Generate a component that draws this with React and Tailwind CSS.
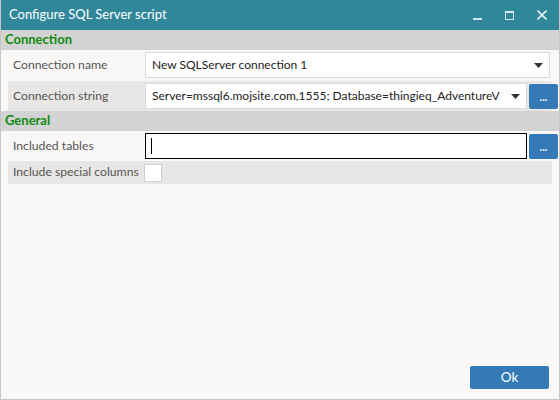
import { useState } from "react";

const font = { fontFamily: 'Lato, "Noto Sans", sans-serif' };

const Caret = () => (
  <svg width="9" height="5" viewBox="0 0 9 5" className="shrink-0">
    <path d="M0 0 H9 L4.5 5 Z" fill="#333" />
  </svg>
);

const Dots = () => (
  <button className="w-[29px] h-[25px] bg-[#337ab7] rounded-[2px] flex items-end justify-center pb-[7px] shrink-0">
    <span className="text-white text-[11px] leading-none font-bold">...</span>
  </button>
);

const Section = ({ title }) => (
  <div className="h-[20px] bg-[#d3d3d3] flex items-center pl-[4px]">
    <span className="text-[#118a11] font-bold text-[13px]">{title}</span>
  </div>
);

const Row = ({ label, alt, children, h = "h-[30px]" }) => (
  <div
    className={`${h} flex items-center mx-[7px] rounded-[3px] ${
      alt ? "bg-[#e8e7e5]" : ""
    }`}
  >
    <div className="w-[137px] pl-[5px] text-[12.2px] text-[#555] shrink-0 whitespace-nowrap">
      {label}
    </div>
    <div className="flex-1 flex items-center gap-[2px] pr-[1px]">{children}</div>
  </div>
);

export default function App() {
  const [checked, setChecked] = useState(false);

  return (
    <div
      className="w-[560px] h-[400px] bg-[#f9f8f6] border-l border-r border-b border-[#c6c6c6] flex flex-col overflow-hidden"
      style={font}
    >
      <div className="h-[30px] bg-[#31879a] flex items-center pl-[8px] pr-[12px] shrink-0">
        <span className="text-white text-[13px] flex-1">Configure SQL Server script</span>
        <div className="flex items-center gap-[23px]">
          <div className="w-[9px] h-[9px] flex items-end">
            <div className="w-[9px] h-[2px] bg-[#d6e8ec]" />
          </div>
          <div className="w-[9px] h-[9px] border border-[#d6e8ec] border-t-2" />
          <svg width="10" height="10" viewBox="0 0 10 10">
            <path d="M0.5 0.5 L9.5 9.5 M9.5 0.5 L0.5 9.5" stroke="#e4eff2" strokeWidth="1.6" />
          </svg>
        </div>
      </div>

      <Section title="Connection" />
      <div className="flex flex-col gap-[1px]">
        <Row label="Connection name">
          <div className="flex-1 h-[26px] bg-white border border-[#d8d8d8] flex items-center pl-[6px] pr-[6px] mr-[1px]">
            <span className="flex-1 text-[12px] text-[#222]">New SQLServer connection 1</span>
            <Caret />
          </div>
        </Row>
        <Row label="Connection string" alt>
          <div className="w-[382px] h-[26px] bg-white border border-[#d8d8d8] flex items-center pl-[6px] pr-[6px]">
            <span className="flex-1 text-[12px] text-[#222] whitespace-nowrap">
              Server=mssql6.mojsite.com,1555; Database=thingieq_AdventureV
            </span>
            <Caret />
          </div>
          <Dots />
        </Row>
      </div>

      <Section title="General" />
      <div className="flex flex-col">
        <Row label="Included tables">
          <div className="w-[382px] h-[26px] bg-white border border-black flex items-center pl-[5px]">
            <div className="w-[1px] h-[16px] bg-black" />
          </div>
          <Dots />
        </Row>
        <Row label="Include special columns" alt h="h-[23px]">
          <button
            onClick={() => setChecked(!checked)}
            className="w-[18px] h-[18px] bg-white border border-[#d0d0d0] -ml-[1px]"
          />
        </Row>
      </div>

      <div className="flex-1" />
      <div className="flex justify-end pr-[10px] pb-[10px]">
        <button className="w-[79px] h-[23px] bg-[#337ab7] rounded-[2px] text-white text-[13.5px]">
          Ok
        </button>
      </div>
    </div>
  );
}
